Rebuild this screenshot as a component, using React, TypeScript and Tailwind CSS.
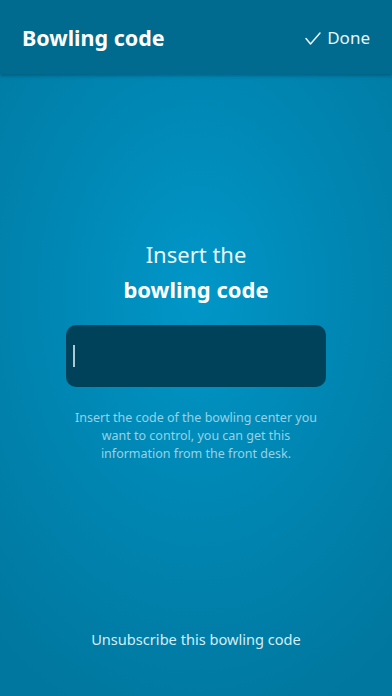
export default function App() {
  return (
    <div
      className="relative flex h-[696px] w-[392px] flex-col overflow-hidden text-white"
      style={{ fontFamily: '"Noto Sans", "Open Sans", sans-serif' }}
    >
      <div className="absolute inset-0 bg-[radial-gradient(ellipse_80%_65%_at_50%_42%,#0097c8_0%,#0087b4_45%,#00779e_100%)]" />

      <header className="relative z-10 flex h-[74px] items-center justify-between bg-[#006b8e] pl-[22px] pr-[22px] shadow-[0_2px_3px_rgba(0,40,60,0.35)]">
        <h1 className="pt-[2px] text-[21.5px] font-bold">Bowling code</h1>
        <button className="flex items-center gap-[6px] pt-[2px] text-[17px] text-[#e8f6fb]">
          <svg width="16" height="13" viewBox="0 0 16 13" fill="none">
            <path d="M1 6.5 L5.5 12 L15 1" stroke="#e8f6fb" strokeWidth="1.5" strokeLinecap="round" strokeLinejoin="round" />
          </svg>
          Done
        </button>
      </header>

      <main className="relative z-10 flex flex-1 flex-col items-center">
        <div className="mt-[163px] text-center text-[22px] leading-[35px]">
          <p className="text-[#eaf7fc]">Insert the</p>
          <p className="font-bold">bowling code</p>
        </div>

        <div className="mt-[18px] flex h-[62px] w-[260px] items-center rounded-[10px] bg-[#00425a] px-[7px]">
          <span className="h-[22px] w-[1.5px] bg-[#a9cbd6]" />
        </div>

        <p className="mt-[22px] w-[260px] text-center text-[12.5px] leading-[18px] text-[#94d3e8]">
          Insert the code of the bowling center you want to control, you can get this information from the front desk.
        </p>

        <button className="mt-auto mb-[45px] text-[14.6px] text-[#d2eef8]">Unsubscribe this bowling code</button>
      </main>
    </div>
  );
}
